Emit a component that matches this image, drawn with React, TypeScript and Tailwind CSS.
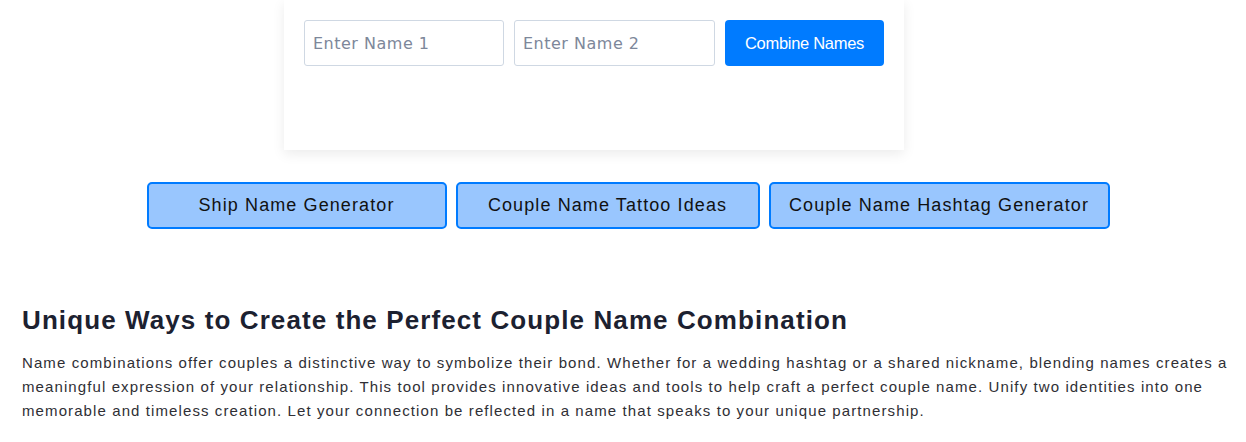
import React from "react";

export default function App() {
  return (
    <div className="w-[1246px] h-[442px] bg-white overflow-hidden" style={{ fontFamily: '"Liberation Sans", Arial, sans-serif' }}>
      <div className="ml-[284px] w-[620px] h-[150px] bg-white shadow-[0_4px_12px_rgba(0,0,0,0.08)] px-[20px] pt-[20px]">
        <div className="flex gap-[10px]">
          <input
            placeholder="Enter Name 1"
            className="w-[200px] h-[46px] border border-[#cfd8e3] rounded-[3px] px-[8px] text-[16px] tracking-[0.5px] text-[#333] placeholder:text-[#7d879a] outline-none"
            style={{ fontFamily: '"DejaVu Sans", sans-serif' }}
          />
          <input
            placeholder="Enter Name 2"
            className="w-[201px] h-[46px] border border-[#cfd8e3] rounded-[3px] px-[8px] text-[16px] tracking-[0.5px] text-[#333] placeholder:text-[#7d879a] outline-none"
            style={{ fontFamily: '"DejaVu Sans", sans-serif' }}
          />
          <button className="w-[159px] h-[46px] bg-[#007bff] text-white rounded-[4px] text-[16.5px] tracking-[-0.3px]">
            Combine Names
          </button>
        </div>
      </div>

      <div className="flex justify-center gap-[9px] mt-[32px] pl-[10px]">
        <button className="w-[300px] h-[47px] bg-[#99c6fe] border-2 border-[#007bff] rounded-[5px] text-[18px] tracking-[1.1px] text-[#111]">
          Ship Name Generator
        </button>
        <button className="w-[304px] h-[47px] bg-[#99c6fe] border-2 border-[#007bff] rounded-[5px] text-[18px] tracking-[1.1px] text-[#111]">
          Couple Name Tattoo Ideas
        </button>
        <button className="w-[341px] h-[47px] bg-[#99c6fe] border-2 border-[#007bff] rounded-[5px] text-[18px] tracking-[1.1px] text-[#111]">
          Couple Name Hashtag Generator
        </button>
      </div>

      <div className="px-[22px] mt-[76px]">
        <h2 className="text-[26px] font-bold tracking-[1.1px] text-[#1c2130] leading-[30px]">
          Unique Ways to Create the Perfect Couple Name Combination
        </h2>
        <p className="mt-[16px] text-[15px] leading-[24px] tracking-[1.1px] text-[#2f2f35] w-[1215px]">
          Name combinations offer couples a distinctive way to symbolize their bond. Whether for a wedding hashtag or a shared nickname, blending names creates a meaningful expression of your relationship. This tool provides innovative ideas and tools to help craft a perfect couple name. Unify two identities into one memorable and timeless creation. Let your connection be reflected in a name that speaks to your unique partnership.
        </p>
      </div>
    </div>
  );
}
